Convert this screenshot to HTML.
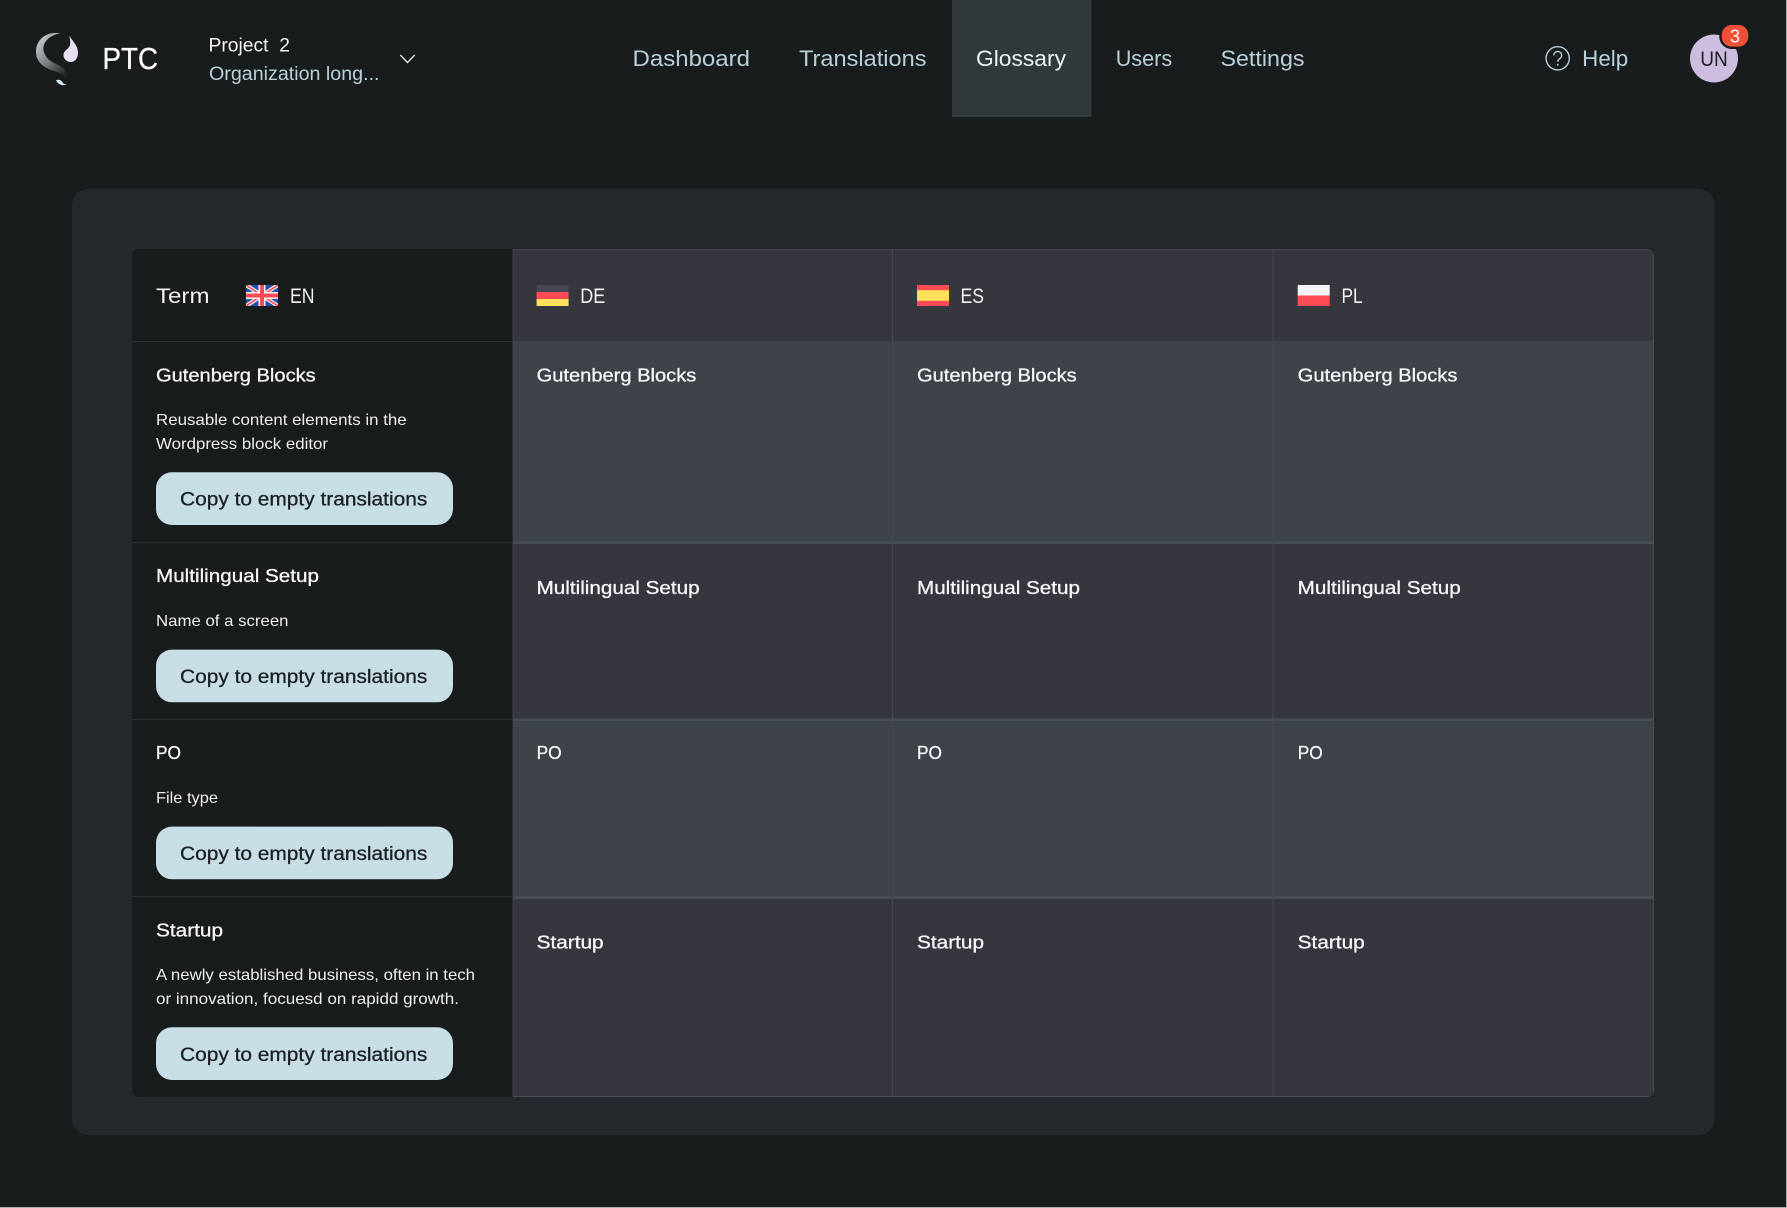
<!DOCTYPE html>
<html lang="en">
<head>
<meta charset="utf-8">
<title>PTC Glossary</title>
<style>
html,body{margin:0;padding:0;background:#181c1d;width:1787px;height:1208px;overflow:hidden}
svg{display:block}
text{font-family:"Liberation Sans",sans-serif;white-space:pre}
.name{font-size:18.6px;fill:#f6f7f8;stroke:#f6f7f8;stroke-width:.3px}
.desc{font-size:16px;fill:#eceeef}
.btn{font-size:19.6px;fill:#1b2023;stroke:#1b2023;stroke-width:.3px}
.hd{font-size:21.5px;fill:#f2f3f4}
.nav{font-size:22px;fill:#b9d0da}
</style>
</head>
<body>
<svg width="1787" height="1208" viewBox="0 0 1787 1208" xmlns="http://www.w3.org/2000/svg">
<defs>
<linearGradient id="lg" x1="0.1" y1="0.1" x2="0.8" y2="1">
<stop offset="0" stop-color="#c8ccd0"/><stop offset=".45" stop-color="#85898c"/><stop offset="1" stop-color="#25272a"/>
</linearGradient>
<clipPath id="tc"><rect x="132" y="249" width="1522" height="848" rx="7"/></clipPath>
<clipPath id="uk"><rect x="246" y="285" width="32" height="21"/></clipPath>
</defs>

<rect width="1787" height="1208" fill="#181c1d"/>

<!-- header -->
<rect x="952" y="0" width="139.5" height="117" fill="#31393c"/>
<path d="M60.7 33.3C47 31 36 39 36 52C36 62 44 68 54 71C60 73 65 75 65 79C69 74 66 69 60 66C52 62 45 59 43.5 50C42.5 42 50 35 60.7 33.3Z" fill="url(#lg)"/>
<path d="M69 35C72 41 78 45 78 53C78 58 75 62 71 62C66 62 63 58 63.5 54.5C64 50 69 49 70 45C70.5 41 70 38 69 35Z" fill="#e8dff2"/>
<path d="M56 80C60 79 62 81 63 83C64 84 65 84.5 67 84.5C63 86 58 85 56 80Z" fill="#d6eaf5"/>
<text x="102.5" y="69" font-size="31" fill="#fff" stroke="#fff" stroke-width=".3" textLength="55.5" lengthAdjust="spacingAndGlyphs">PTC</text>
<text x="208.5" y="51.7" font-size="19" fill="#f2f4f5" textLength="81.5" lengthAdjust="spacingAndGlyphs">Project  2</text>
<text x="209" y="80" font-size="19.6" fill="#b9d0da" textLength="170.5" lengthAdjust="spacingAndGlyphs">Organization long...</text>
<path d="M400.3 55L407.5 62.5L414.7 55" fill="none" stroke="#dfe6ea" stroke-width="1.4"/>

<text class="nav" x="632.5" y="66" textLength="117.5" lengthAdjust="spacingAndGlyphs">Dashboard</text>
<text class="nav" x="799" y="66" textLength="127.5" lengthAdjust="spacingAndGlyphs">Translations</text>
<text class="nav" x="976" y="66" textLength="90" lengthAdjust="spacingAndGlyphs" style="fill:#eef3f5">Glossary</text>
<text class="nav" x="1115.7" y="66" textLength="56.5" lengthAdjust="spacingAndGlyphs">Users</text>
<text class="nav" x="1220.5" y="66" textLength="84" lengthAdjust="spacingAndGlyphs">Settings</text>

<circle cx="1557.7" cy="58.3" r="11.6" fill="none" stroke="#b9d0da" stroke-width="1.4"/>
<path d="M1553.8 55.4a3.9 3.9 0 1 1 6 3.3c-1.3.8-2 1.5-2 3" fill="none" stroke="#b9d0da" stroke-width="1.4"/>
<circle cx="1557.8" cy="64.8" r=".9" fill="#b9d0da"/>
<text class="nav" x="1582.2" y="66" textLength="46" lengthAdjust="spacingAndGlyphs">Help</text>

<circle cx="1714" cy="58.5" r="24" fill="#cbbce0"/>
<text x="1700.3" y="66" font-size="21.5" fill="#1f2124" textLength="27.5" lengthAdjust="spacingAndGlyphs">UN</text>
<rect x="1720.5" y="23.8" width="29" height="24" rx="11" fill="#f05038" stroke="#181c1d" stroke-width="2.4"/>
<text x="1730" y="42.7" font-size="18" fill="#fff" textLength="10" lengthAdjust="spacingAndGlyphs">3</text>

<!-- card -->
<rect x="72" y="189" width="1642.5" height="946" rx="16" fill="#25282d"/>

<!-- table -->
<g clip-path="url(#tc)">
<rect x="132" y="249" width="381" height="848" fill="#181c1d"/>
<rect x="513" y="249" width="1141" height="93" fill="#36373e"/>
<rect x="513" y="342" width="1141" height="201" fill="#3e434a"/>
<rect x="513" y="543" width="1141" height="177" fill="#35363e"/>
<rect x="513" y="720" width="1141" height="177" fill="#3e434a"/>
<rect x="513" y="897" width="1141" height="200" fill="#35363e"/>
<!-- row lines -->
<rect x="132" y="341" width="381" height="1" fill="#2b2e32"/>
<rect x="132" y="542" width="381" height="1" fill="#2b2e32"/>
<rect x="132" y="719" width="381" height="1" fill="#2b2e32"/>
<rect x="132" y="896" width="381" height="1" fill="#2b2e32"/>
<rect x="513" y="341" width="1141" height="1" fill="#44464d"/>
<rect x="513" y="541.5" width="1141" height="2.5" fill="#474e55"/>
<rect x="513" y="718.5" width="1141" height="2.5" fill="#474e55"/>
<rect x="513" y="896" width="1141" height="3" fill="#474e55"/>
<!-- column lines -->
<rect x="512.5" y="249" width="1" height="848" fill="#3f4148"/>
<rect x="892" y="249" width="1" height="848" fill="#46484f"/>
<rect x="1272.5" y="249" width="1" height="848" fill="#46484f"/>
<rect x="513" y="249" width="1141" height="1.2" fill="#42444b"/>
<rect x="513" y="1096" width="1141" height="1" fill="#4b4d54"/>
<rect x="1653" y="249" width="1" height="848" fill="#4b4d54"/>
</g>

<!-- header row -->
<text class="hd" x="156" y="303" textLength="53.5" lengthAdjust="spacingAndGlyphs">Term</text>
<g clip-path="url(#uk)">
<rect x="246" y="285" width="32" height="21" fill="#2350ab"/>
<path d="M246 285L278 306M278 285L246 306" stroke="#f5f5f5" stroke-width="4"/>
<path d="M246 285L278 306M278 285L246 306" stroke="#ff4b55" stroke-width="1.6"/>
<path d="M262 285V306M246 295.5H278" stroke="#f5f5f5" stroke-width="7"/>
<path d="M262 285V306M246 295.5H278" stroke="#ff4b55" stroke-width="4"/>
</g>
<text class="hd" x="290" y="303" textLength="24.5" lengthAdjust="spacingAndGlyphs">EN</text>

<rect x="536.6" y="285" width="32" height="7" fill="#464655"/>
<rect x="536.6" y="292" width="32" height="7" fill="#ff4b55"/>
<rect x="536.6" y="299" width="32" height="7" fill="#ffe15a"/>
<text class="hd" x="580.3" y="303" textLength="25" lengthAdjust="spacingAndGlyphs">DE</text>

<rect x="917" y="285" width="32" height="21" fill="#ff4b55"/>
<rect x="917" y="290.2" width="32" height="10.6" fill="#ffe15a"/>
<text class="hd" x="960.5" y="303" textLength="23.5" lengthAdjust="spacingAndGlyphs">ES</text>

<rect x="1297.7" y="285" width="32" height="10.5" fill="#f5f5f5"/>
<rect x="1297.7" y="295.5" width="32" height="10.5" fill="#ff4b55"/>
<text class="hd" x="1341.5" y="303" textLength="21.2" lengthAdjust="spacingAndGlyphs">PL</text>

<!-- row 1 -->
<text class="name" x="156" y="381.3" textLength="159.7" lengthAdjust="spacingAndGlyphs">Gutenberg Blocks</text>
<text class="desc" x="156" y="425" textLength="250.7" lengthAdjust="spacingAndGlyphs">Reusable content elements in the</text>
<text class="desc" x="156" y="449" textLength="172" lengthAdjust="spacingAndGlyphs">Wordpress block editor</text>
<rect x="156" y="472.3" width="297" height="52.7" rx="16" fill="#c8dee7"/>
<text class="btn" x="180" y="505.7" textLength="247.3" lengthAdjust="spacingAndGlyphs">Copy to empty translations</text>
<text class="name" x="536.6" y="381.3" textLength="159.7" lengthAdjust="spacingAndGlyphs">Gutenberg Blocks</text>
<text class="name" x="917" y="381.3" textLength="159.7" lengthAdjust="spacingAndGlyphs">Gutenberg Blocks</text>
<text class="name" x="1297.7" y="381.3" textLength="159.7" lengthAdjust="spacingAndGlyphs">Gutenberg Blocks</text>

<!-- row 2 -->
<text class="name" x="156" y="582" textLength="163" lengthAdjust="spacingAndGlyphs">Multilingual Setup</text>
<text class="desc" x="156" y="626" textLength="132.5" lengthAdjust="spacingAndGlyphs">Name of a screen</text>
<rect x="156" y="649.6" width="297" height="52.7" rx="16" fill="#c8dee7"/>
<text class="btn" x="180" y="683" textLength="247.3" lengthAdjust="spacingAndGlyphs">Copy to empty translations</text>
<text class="name" x="536.6" y="594" textLength="163" lengthAdjust="spacingAndGlyphs">Multilingual Setup</text>
<text class="name" x="917" y="594" textLength="163" lengthAdjust="spacingAndGlyphs">Multilingual Setup</text>
<text class="name" x="1297.7" y="594" textLength="163" lengthAdjust="spacingAndGlyphs">Multilingual Setup</text>

<!-- row 3 -->
<text class="name" x="156" y="759" textLength="25" lengthAdjust="spacingAndGlyphs">PO</text>
<text class="desc" x="156" y="803" textLength="62" lengthAdjust="spacingAndGlyphs">File type</text>
<rect x="156" y="826.6" width="297" height="52.7" rx="16" fill="#c8dee7"/>
<text class="btn" x="180" y="860" textLength="247.3" lengthAdjust="spacingAndGlyphs">Copy to empty translations</text>
<text class="name" x="536.6" y="759" textLength="25" lengthAdjust="spacingAndGlyphs">PO</text>
<text class="name" x="917" y="759" textLength="25" lengthAdjust="spacingAndGlyphs">PO</text>
<text class="name" x="1297.7" y="759" textLength="25" lengthAdjust="spacingAndGlyphs">PO</text>

<!-- row 4 -->
<text class="name" x="156" y="936.7" textLength="67" lengthAdjust="spacingAndGlyphs">Startup</text>
<text class="desc" x="156" y="980" textLength="319" lengthAdjust="spacingAndGlyphs">A newly established business, often in tech</text>
<text class="desc" x="156" y="1004" textLength="303" lengthAdjust="spacingAndGlyphs">or innovation, focuesd on rapidd growth.</text>
<rect x="156" y="1027.3" width="297" height="52.7" rx="16" fill="#c8dee7"/>
<text class="btn" x="180" y="1061" textLength="247.3" lengthAdjust="spacingAndGlyphs">Copy to empty translations</text>
<text class="name" x="536.6" y="948.5" textLength="67" lengthAdjust="spacingAndGlyphs">Startup</text>
<text class="name" x="917" y="948.5" textLength="67" lengthAdjust="spacingAndGlyphs">Startup</text>
<text class="name" x="1297.7" y="948.5" textLength="67" lengthAdjust="spacingAndGlyphs">Startup</text>

<!-- page edges -->
<rect x="0" y="1207" width="1787" height="1" fill="#a9abac"/>
<rect x="1786" y="0" width="1" height="1208" fill="#a9abac"/>
</svg>
</body>
</html>
